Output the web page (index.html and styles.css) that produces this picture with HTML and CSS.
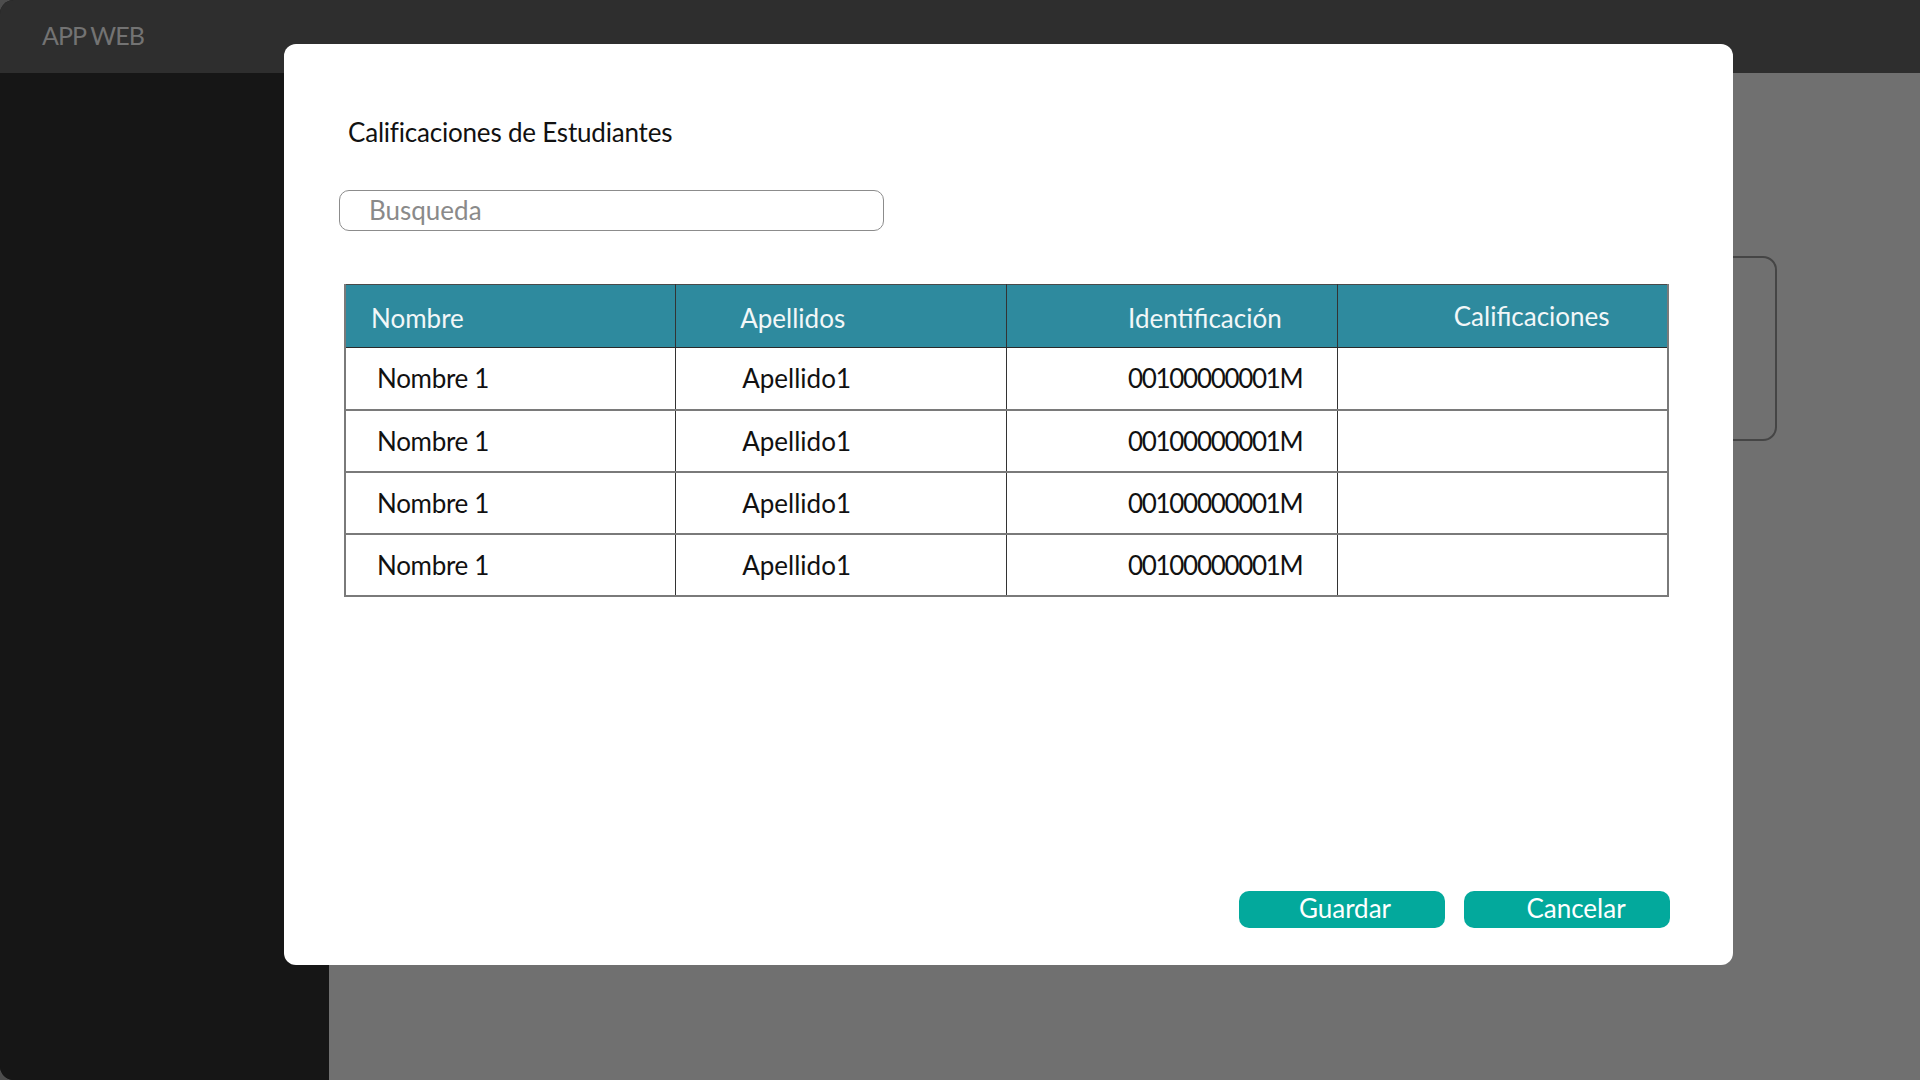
FILE: index.html
```html
<!DOCTYPE html>
<html lang="es">
<head>
<meta charset="utf-8">
<title>APP WEB</title>
<link rel="stylesheet" href="styles.css">
</head>
<body>
<div class="app">
  <header class="topbar"><span class="brand">APP WEB</span></header>
  <div class="body-row">
    <aside class="sidebar"></aside>
    <main class="main">
      <div class="bg-card"></div>
    </main>
  </div>

  <div class="modal">
    <h1 class="modal-title">Calificaciones de Estudiantes</h1>
    <div class="search"><span class="search-placeholder">Busqueda</span></div>
    <table class="grades">
      <thead>
        <tr>
          <th class="c1">Nombre</th>
          <th class="c2">Apellidos</th>
          <th class="c3">Identificación</th>
          <th class="c4">Calificaciones</th>
        </tr>
      </thead>
      <tbody>
        <tr><td class="c1">Nombre 1</td><td class="c2">Apellido1</td><td class="c3">00100000001M</td><td class="c4"></td></tr>
        <tr><td class="c1">Nombre 1</td><td class="c2">Apellido1</td><td class="c3">00100000001M</td><td class="c4"></td></tr>
        <tr><td class="c1">Nombre 1</td><td class="c2">Apellido1</td><td class="c3">00100000001M</td><td class="c4"></td></tr>
        <tr><td class="c1">Nombre 1</td><td class="c2">Apellido1</td><td class="c3">00100000001M</td><td class="c4"></td></tr>
      </tbody>
    </table>
    <div class="actions">
      <button class="btn btn-save">Guardar</button>
      <button class="btn btn-cancel">Cancelar</button>
    </div>
  </div>
</div>
</body>
</html>
```
FILE: styles.css
```css
* { box-sizing: border-box; }
html, body { margin: 0; padding: 0; }
body {
  width: 1920px;
  height: 1080px;
  background: #4d4d4d;
  font-family: Lato, "Open Sans", sans-serif;
  overflow: hidden;
}
.app {
  position: relative;
  width: 1920px;
  height: 1080px;
  display: flex;
  flex-direction: column;
  border-radius: 14px 0 0 14px;
  overflow: hidden;
  background: #161616;
}
.topbar {
  height: 73px;
  flex: none;
  background: #2e2e2e;
  display: flex;
  align-items: center;
  padding-left: 42px;
  padding-bottom: 4px;
}
.brand {
  color: #737373;
  font-size: 25px;
  letter-spacing: -1px;
}
.body-row {
  flex: 1;
  display: flex;
}
.sidebar {
  width: 329px;
  flex: none;
  background: #161616;
}
.main {
  flex: 1;
  background: #707070;
  padding: 183px 143px 0 120px;
}
.bg-card {
  height: 185px;
  border: 2px solid #454545;
  border-radius: 14px;
}
.modal {
  position: absolute;
  left: 284px;
  top: 44px;
  width: 1449px;
  height: 921px;
  background: #ffffff;
  border-radius: 12px;
  padding: 72px 63px 37px 60px;
  display: flex;
  flex-direction: column;
}
.modal-title {
  margin: 0 0 0 4px;
  font-weight: 400;
  font-size: 26px;
  line-height: 32px;
  color: #111;
  letter-spacing: -0.2px;
}
.search {
  margin: 42px 0 0 -5px;
  width: 545px;
  height: 41px;
  border: 1px solid #8c8c8c;
  border-radius: 10px;
  display: flex;
  align-items: center;
  padding-left: 29px;
}
.search-placeholder {
  color: #8a8a8a;
  font-size: 26px;
  line-height: 31px;
}
.grades {
  margin-top: 53px;
  width: 1325px;
  border-collapse: collapse;
  table-layout: fixed;
  border: 2px solid #7a7a7a;
  border-top: 1px solid #4a4a4a;
}
.grades th, .grades td {
  font-size: 26px;
  font-weight: 400;
  text-align: left;
  padding: 0;
  border-left: 1px solid #333;
  white-space: nowrap;
}
.grades th {
  height: 63px;
  background: #2e8a9e;
  color: #f2f7f8;
  padding-top: 4px;
  border-bottom: 1px solid #2a2a2a;
}
.grades th.c4 { padding-top: 0; }
.grades td {
  height: 62px;
  color: #111;
  border-bottom: 2px solid #7a7a7a;
}
.grades th.c1 { padding-left: 25px; }
.grades th.c2 { padding-left: 64px; }
.grades th.c3 { padding-left: 121px; }
.grades th.c4 { padding-left: 116px; }
.grades td.c1 { padding-left: 31px; letter-spacing: -0.3px; }
.grades td.c2 { padding-left: 66px; }
.grades td.c3 { padding-left: 121px; letter-spacing: -1.3px; }
.actions {
  margin-top: auto;
  display: flex;
  justify-content: flex-end;
  gap: 19px;
}
.btn {
  width: 206px;
  height: 37px;
  border: none;
  border-radius: 10px;
  background: #03a99c;
  color: #ffffff;
  font-family: Lato, "Open Sans", sans-serif;
  font-size: 26px;
  line-height: 30px;
  padding: 0 0 4px;
  cursor: pointer;
}
.btn-save { padding-left: 6px; }
.btn-cancel { padding-left: 18px; }
```
